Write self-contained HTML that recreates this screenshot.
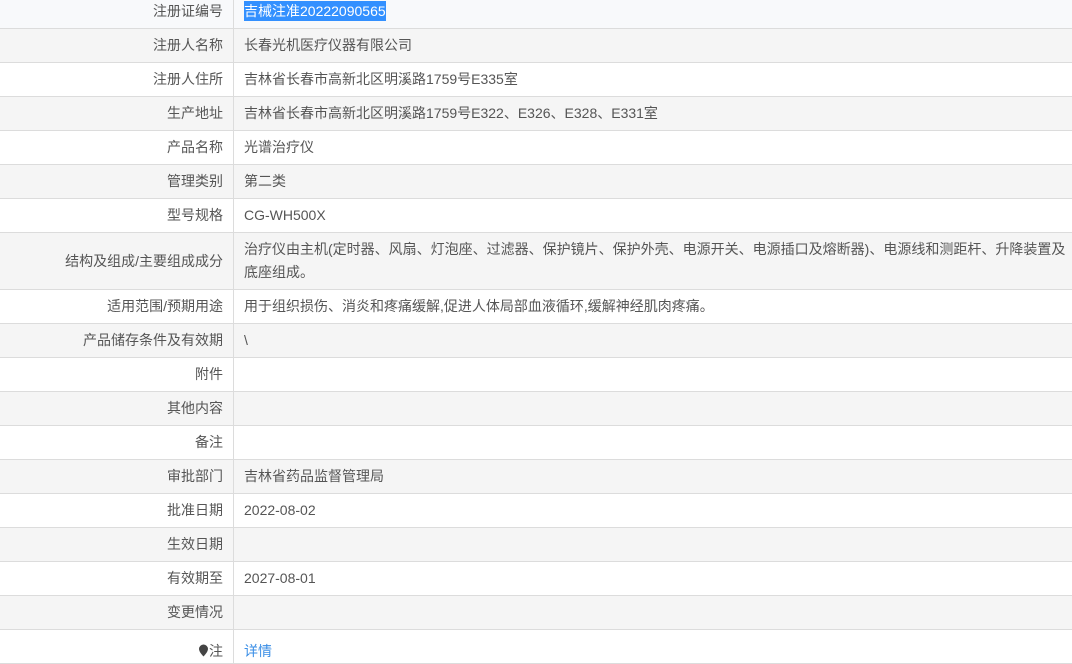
<!DOCTYPE html>
<html><head><meta charset="utf-8"><style>
body{margin:0;width:1072px;height:655px;overflow:hidden;background:#fff;font-family:"Liberation Sans","Noto Sans CJK SC",sans-serif;font-size:14px;color:#555}
table{border-collapse:collapse;table-layout:fixed;width:1074px;margin-top:-6px;margin-left:-1px}
td{border:1px solid #dcdcdc;height:33px;padding:0 2px 0 10px;line-height:23px;white-space:nowrap}
td.l{text-align:right;padding-right:10px}
tr:nth-child(even) td{background:#f5f5f5}
tr.first td{background:#f8f9fb;height:33px}
.sel{background:#3390ff;color:#fff;padding:2px 0}
a{color:#3a8ee6;text-decoration:none}
</style></head><body>
<table>
<colgroup><col style="width:234px"><col></colgroup>
<tr class="first"><td class="l">注册证编号</td><td><span class="sel">吉械注准20222090565</span></td></tr>
<tr><td class="l">注册人名称</td><td>长春光机医疗仪器有限公司</td></tr>
<tr><td class="l">注册人住所</td><td>吉林省长春市高新北区明溪路1759号E335室</td></tr>
<tr><td class="l">生产地址</td><td>吉林省长春市高新北区明溪路1759号E322、E326、E328、E331室</td></tr>
<tr><td class="l">产品名称</td><td>光谱治疗仪</td></tr>
<tr><td class="l">管理类别</td><td>第二类</td></tr>
<tr><td class="l">型号规格</td><td>CG-WH500X</td></tr>
<tr><td class="l" style="height:56px">结构及组成/主要组成成分</td><td style="padding-top:4px;padding-bottom:4px;overflow:hidden">治疗仪由主机(定时器、风扇、灯泡座、过滤器、保护镜片、保护外壳、电源开关、电源插口及熔断器)、电源线和测距杆、升降装置及<br>底座组成。</td></tr>
<tr><td class="l">适用范围/预期用途</td><td>用于组织损伤、消炎和疼痛缓解,促进人体局部血液循环,缓解神经肌肉疼痛。</td></tr>
<tr><td class="l">产品储存条件及有效期</td><td>\</td></tr>
<tr><td class="l">附件</td><td></td></tr>
<tr><td class="l">其他内容</td><td></td></tr>
<tr><td class="l">备注</td><td></td></tr>
<tr><td class="l">审批部门</td><td>吉林省药品监督管理局</td></tr>
<tr><td class="l">批准日期</td><td>2022-08-02</td></tr>
<tr><td class="l">生效日期</td><td></td></tr>
<tr><td class="l">有效期至</td><td>2027-08-01</td></tr>
<tr><td class="l">变更情况</td><td></td></tr>
<tr><td class="l" style="background:#fff;vertical-align:bottom"><svg width="11" height="13" viewBox="0 0 11 13" style="vertical-align:-1px"><path d="M5.5 0.5a4.5 4.5 0 0 1 4.5 4.5c0 3-4.5 7.5-4.5 7.5S1 8 1 5a4.5 4.5 0 0 1 4.5-4.5z" fill="#444"/></svg>注</td><td style="background:#fff;vertical-align:bottom"><a>详情</a></td></tr>
</table>
</body></html>
